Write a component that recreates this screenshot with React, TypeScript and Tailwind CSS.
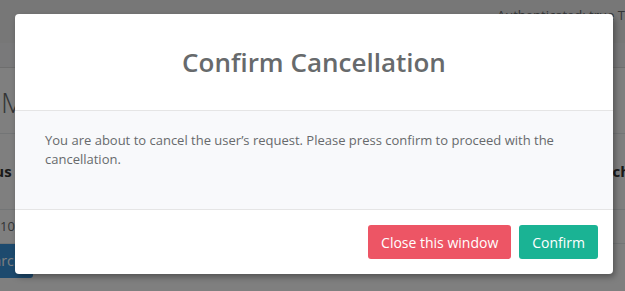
import React from 'react';

const App: React.FC = () => {
  return (
    <div
      className="relative w-[625px] h-[291px] overflow-hidden bg-white text-[#676a6c]"
      style={{ fontFamily: '"Open Sans", "Liberation Sans", sans-serif' }}
    >
      {/* page underneath the modal */}
      <div className="h-[43px] bg-[#eeeeee] flex justify-end pt-[6px] whitespace-nowrap">
        <span className="text-[13px] leading-[18px] w-[128px] overflow-hidden">Authenticated: true Test User</span>
      </div>
      <div className="h-[25px] bg-[#f3f3f4] border-b border-[#dcdcdc]" />
      <div className="ml-[-14px] w-[644px]">
        <h1 className="text-[28px] font-light leading-[62px] pt-[3px] pl-[15px] border-b border-[#e7eaec]">Manage Requests</h1>
        <div className="flex justify-between h-[76px] items-center border-b border-[#e7eaec] text-[15px] font-bold text-[#333]">
          <span className="ml-[-22px]">Status</span>
          <span>Switch</span>
        </div>
        <div className="h-[34px] flex items-center border-b border-[#e7eaec] text-[13px]">
          <span className="ml-[14px]">10:32</span>
        </div>
        <div className="flex">
          <span className="ml-[-20px] h-[34px] w-[67px] px-3 bg-[#3b94dd] text-white text-[14px] leading-[34px] rounded-[3px] text-right">Search</span>
        </div>
      </div>

      {/* backdrop */}
      <div className="absolute inset-0 bg-black/50" />

      {/* modal */}
      <div className="absolute left-[15px] top-[14px] w-[598px] bg-white rounded-[4px] shadow-[2px_3px_6px_rgba(0,0,0,0.35)] overflow-hidden">
        <div className="py-[30px] text-center border-b border-[#e5e5e5]">
          <h4 className="text-[26px] leading-[36px] font-semibold text-[#676a6c]">Confirm Cancellation</h4>
        </div>
        <div className="bg-[#f8f9fb] px-[30px] pt-[20px] pb-[30px]">
          <p className="text-[13px] leading-[19px] mb-[10px] text-[#676a6c]">
            You are about to cancel the user’s request. Please press confirm to proceed with the cancellation.
          </p>
        </div>
        <div className="border-t border-[#e5e5e5] p-[15px] flex justify-end gap-2">
          <button className="h-[34px] px-[13px] bg-[#ed5565] text-white text-[14px] rounded-[3px]">Close this window</button>
          <button className="h-[34px] px-[13px] bg-[#1ab394] text-white text-[14px] rounded-[3px]">Confirm</button>
        </div>
      </div>
    </div>
  );
};

export default App;
